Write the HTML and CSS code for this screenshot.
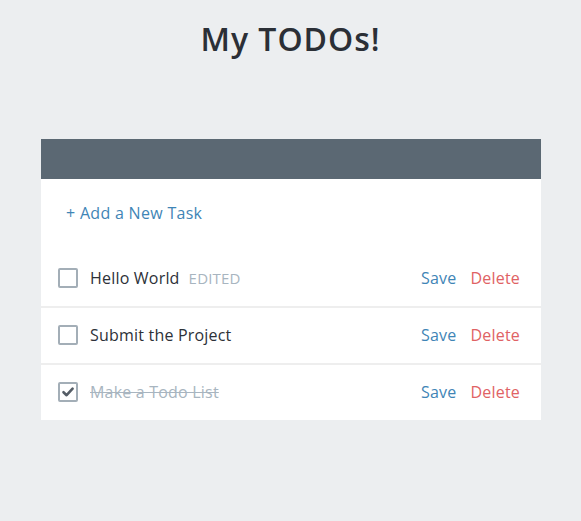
FILE: index.html
```html
<!DOCTYPE html>
<html>
<head>
<meta charset="utf-8">
<link rel="stylesheet" href="styles.css">
</head>
<body>
<h1 class="title">My TODOs!</h1>
<div class="card">
  <div class="card-header"></div>
  <div class="card-body">
    <a class="add-task">+ Add a New Task</a>
    <ul class="list">
      <li class="item">
        <span class="check"></span>
        <span class="label">Hello World</span>
        <span class="edited">EDITED</span>
        <span class="actions"><a class="save">Save</a><a class="delete">Delete</a></span>
      </li>
      <li class="item">
        <span class="check"></span>
        <span class="label">Submit the Project</span>
        <span class="actions"><a class="save">Save</a><a class="delete">Delete</a></span>
      </li>
      <li class="item">
        <span class="check checked"><svg viewBox="0 0 18 18" width="18" height="18"><path d="M4.5 9.2 L7.6 12.2 L13.6 5.6" fill="none" stroke="#555d66" stroke-width="2.6" stroke-linecap="round" stroke-linejoin="round"/></svg></span>
        <span class="label done">Make a Todo List</span>
        <span class="actions"><a class="save">Save</a><a class="delete">Delete</a></span>
      </li>
    </ul>
  </div>
</div>
</body>
</html>
```
FILE: styles.css
```css
html, body { margin: 0; padding: 0; }
body {
  background: #eceef0;
  font-family: "Open Sans", "Liberation Sans", sans-serif;
  width: 581px;
  height: 521px;
  overflow: hidden;
}
.title {
  margin: 0;
  padding-top: 19px;
  text-align: center;
  font-family: "Open Sans", sans-serif;
  font-size: 32px;
  font-weight: 600;
  color: #2b2f36;
  line-height: 40px;
  letter-spacing: 1px;
}
.card {
  width: 500px;
  margin: 80px 0 0 41px;
  background: #fff;
}
.card-header {
  height: 40px;
  background: #5b6873;
}
.card-body {
  padding-top: 24px;
}
.add-task {
  display: block;
  padding-left: 25px;
  font-size: 16px;
  letter-spacing: 0.3px;
  line-height: 20px;
  color: #3f85b6;
  margin-bottom: 28px;
}
.list { list-style: none; margin: 0; padding: 0; }
.item {
  display: flex;
  align-items: center;
  height: 53px;
  padding: 0 21px 2px 17px;
  border-bottom: 2px solid #eeeeee;
  font-size: 16px;
  letter-spacing: 0.2px;
}
.item:last-child { border-bottom: none; }
.check {
  width: 16px;
  height: 16px;
  border: 2px solid #a3aeb7;
  border-radius: 2px;
  margin-right: 12px;
  position: relative;
  flex: none;
}
.check.checked svg { position: absolute; left: -1px; top: -1px; }
.label { color: #2d3138; }
.label.done { color: #a8b5c0; text-decoration: line-through; }
.edited {
  margin-left: 9px;
  color: #a8b5c0;
  font-size: 15px;
}
.actions { margin-left: auto; display: flex; gap: 14px; }
.save { color: #3f85b6; }
.delete { color: #e06264; }
```
